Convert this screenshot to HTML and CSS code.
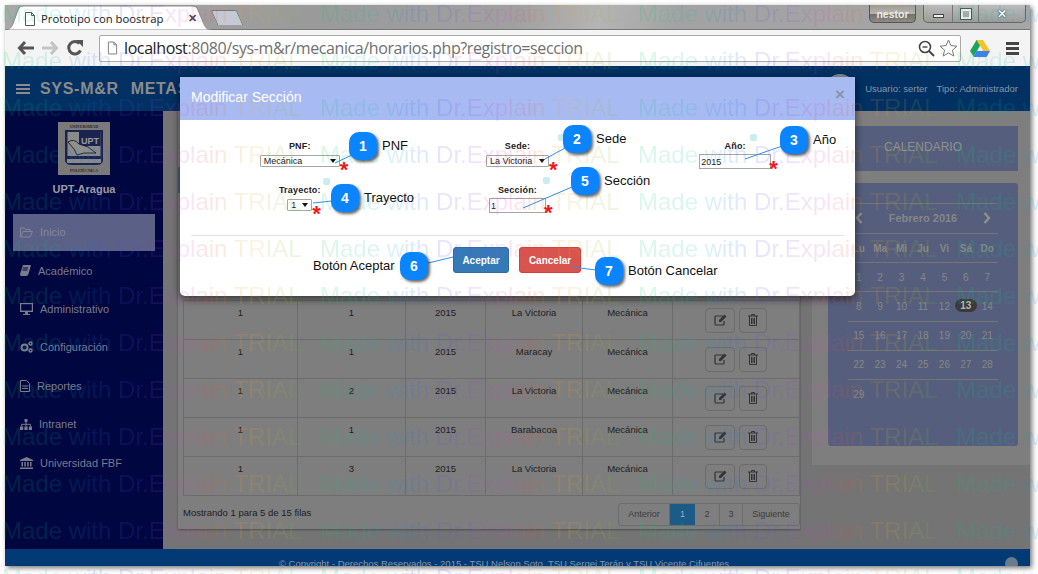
FILE: index.html
```html
<!DOCTYPE html>
<html lang="es">
<head>
  <meta charset="UTF-8">
  <meta name="viewport" content="width=device-width, initial-scale=1.0">
  <title>Prototipo con boostrap</title>
  <link rel="stylesheet" href="styles.css">
</head>
<body>
  <div class="window">
    <div class="titlebar">
      <div class="tab">
        <svg class="tab-shape" width="206" height="25" viewBox="0 0 206 25"><path d="M0 25 C5 25 7 22 9 16 L13 5 C14 2 16 1 19 1 L186 1 C190 1 192 2 193 5 L198 17 C200 22 202 25 206 25 Z" fill="#fff" stroke="#8a8a8a"/></svg>
        <svg class="tab-icon" width="12" height="14" viewBox="0 0 12 14"><path d="M1.5 .5 H7.5 L10.5 3.5 V13.5 H1.5 Z M7.5 .5 V3.5 H10.5" fill="#fff" stroke="#555"/></svg>
        <span class="tab-title">Prototipo con boostrap</span>
        <span class="tab-close">✕</span>
      </div>
      <div class="newtab"></div>
      <div class="user-badge">nestor</div>
      <div class="win-buttons">
        <span class="win-btn"><i class="min"></i></span>
        <span class="win-btn mid"><i class="max"></i></span>
        <span class="win-btn close">✕</span>
      </div>
    </div>

    <div class="toolbar">
      <svg class="tool" width="18" height="16" viewBox="0 0 18 16"><path d="M8 2 L2.5 8 L8 14 M3 8 H17" fill="none" stroke="#555" stroke-width="3"/></svg>
      <svg class="tool" width="18" height="16" viewBox="0 0 18 16"><path d="M10 2 L15.5 8 L10 14 M15 8 H1" fill="none" stroke="#c4c4c4" stroke-width="3"/></svg>
      <svg class="tool" width="18" height="18" viewBox="0 0 18 18"><path d="M14.5 11.5 A6.2 6.2 0 1 1 13.5 4.5" fill="none" stroke="#555" stroke-width="3"/><path d="M10 1 H17 V8 Z" fill="#555"/></svg>
      <div class="address">
        <svg width="11" height="14" viewBox="0 0 12 14"><path d="M1.5 .5 H7.5 L10.5 3.5 V13.5 H1.5 Z M7.5 .5 V3.5 H10.5" fill="#fff" stroke="#777"/></svg>
        <span class="url"><b>localhost</b>:8080/sys-m&amp;r/mecanica/horarios.php?registro=seccion</span>
        <svg class="zoom-icon" width="17" height="17" viewBox="0 0 17 17"><circle cx="7" cy="7" r="5.5" fill="none" stroke="#444" stroke-width="1.6"/><path d="M11 11 L16 16" stroke="#444" stroke-width="2"/><path d="M4.5 7 H9.5" stroke="#444" stroke-width="1.4"/></svg>
        <svg width="19" height="18" viewBox="0 0 19 18"><path d="M9.5 1 L12 6.6 L18 7.2 L13.4 11.2 L14.8 17 L9.5 14 L4.2 17 L5.6 11.2 L1 7.2 L7 6.6 Z" fill="#fff" stroke="#777"/></svg>
      </div>
      <svg class="drive" width="20" height="17" viewBox="0 0 20 17"><path d="M6.5 0 H13 L7 11 L3.6 16.5 L0 11 Z" fill="#1da261"/><path d="M6.5 0 H13 L20 11 H13.2 Z" fill="#f6c32c"/><path d="M6.6 11 H20 L16.5 17 H3.4 Z" fill="#4080ea"/></svg>
      <div class="menu-bars"><i></i><i></i><i></i></div>
    </div>

    <div class="page">
      <header class="appbar">
        <div class="burger"><i></i><i></i><i></i></div>
        <span class="brand">SYS-M&amp;R</span>
        <span class="brand brand-two">METAS</span>
        <div class="session">
          <span class="avatar"></span>
          <span>Usuario: serter</span>
          <span>Tipo: Administrador</span>
        </div>
      </header>

      <div class="layout">
        <aside class="sidebar">
          <svg class="logo" width="52" height="53" viewBox="0 0 52 53">
            <rect width="52" height="53" fill="#7a7a7a"/>
            <text x="26" y="6" class="logo-small">UNIVERSIDAD</text>
            <path d="M7 8 H45 V38 Q45 43 38 43 H14 Q7 43 7 38 Z" fill="#1b2450"/>
            <rect x="9.5" y="10" width="33" height="24" fill="#8a8a8a"/>
            <rect x="21" y="10" width="21.5" height="14" fill="#1b2450"/>
            <path d="M10 20 Q16 16 21 22 L30 25 L38 31 L26 31 L19 33 L16 27 Z" fill="#8f8f8f" stroke="#111" stroke-width=".8"/>
            <text x="32" y="22" class="logo-text">UPT</text>
            <rect x="9" y="37" width="34" height="4" fill="#8a8a8a"/>
            <text x="26" y="50" class="logo-small">POLITÉCNICA</text>
          </svg>
          <div class="campus">UPT-Aragua</div>
          <nav class="nav">
            <a class="nav-item active">
              <svg width="13" height="11" viewBox="0 0 13 11"><path d="M.5 10 V1 H4.5 L5.5 2.5 H10 V4.5 M.5 10 L3 4.5 H12.5 L10 10 Z" fill="none" stroke="#81849c"/></svg>
              <span>Inicio</span>
            </a>
            <a class="nav-item">
              <svg width="11" height="11" viewBox="0 0 11 11"><path d="M3 0 H11 L8.5 9 Q8 11 6 11 H1 Q0 11 0 9 Z" fill="#7b7b8c"/><path d="M3 3 H8 M2.5 5 H7.5" stroke="#000640"/></svg>
              <span>Académico</span>
            </a>
            <a class="nav-item">
              <svg width="13" height="12" viewBox="0 0 13 12"><path d="M0 0 H13 V9 H8 V11 H10 V12 H3 V11 H5 V9 H0 Z" fill="#7b7b8c"/><rect x="1.2" y="1.2" width="10.6" height="6.4" fill="#000640"/></svg>
              <span>Administrativo</span>
            </a>
            <a class="nav-item">
              <svg width="13" height="12" viewBox="0 0 13 12"><circle cx="4.5" cy="6.5" r="3" fill="none" stroke="#7b7b8c" stroke-width="2"/><circle cx="10.5" cy="2.5" r="1.5" fill="none" stroke="#7b7b8c" stroke-width="1.4"/><circle cx="10.5" cy="9.5" r="1.5" fill="none" stroke="#7b7b8c" stroke-width="1.4"/></svg>
              <span>Configuración</span>
            </a>
            <a class="nav-item">
              <svg width="10" height="12" viewBox="0 0 10 12"><path d="M.5 .5 H6.5 L9.5 3.5 V11.5 H.5 Z" fill="none" stroke="#7b7b8c"/><path d="M2 6 H8 M2 8.5 H8" stroke="#7b7b8c"/></svg>
              <span>Reportes</span>
            </a>
            <a class="nav-item">
              <svg width="12" height="11" viewBox="0 0 12 11"><path d="M4.5 0 H7.5 V3 H4.5 Z M0 7.5 H3.2 V11 H0 Z M4.4 7.5 H7.6 V11 H4.4 Z M8.8 7.5 H12 V11 H8.8 Z" fill="#7b7b8c"/><path d="M1.6 7.5 V5.3 H10.4 V7.5 M6 3 V7.5" fill="none" stroke="#7b7b8c"/></svg>
              <span>Intranet</span>
            </a>
            <a class="nav-item">
              <svg width="13" height="12" viewBox="0 0 13 12"><path d="M6.5 0 L13 3 V4 H0 V3 Z M0 10.5 H13 V12 H0 Z M1.5 5 H3 V9.5 H1.5 Z M4.3 5 H5.8 V9.5 H4.3 Z M7.2 5 H8.7 V9.5 H7.2 Z M10 5 H11.5 V9.5 H10 Z" fill="#7b7b8c"/></svg>
              <span>Universidad FBF</span>
            </a>
          </nav>
        </aside>

        <main class="content">
          <section class="table-panel">
            <div class="panel-head"></div>
            <table class="grid">
              <tbody>
                <tr>
                  <td>1</td><td>1</td><td>2015</td><td>La Victoria</td><td>Mecánica</td>
                  <td class="actions"><span class="icon-btn"><svg width="13" height="12" viewBox="0 0 13 12"><path d="M9 2 H2 Q1 2 1 3 V10 Q1 11 2 11 H9 Q10 11 10 10 V7" fill="none" stroke="#333" stroke-width="1.2"/><path d="M5 6 L10.5 .5 L12.5 2.5 L7 8 H5 Z" fill="#333"/></svg></span><span class="icon-btn trash"><svg width="10" height="12" viewBox="0 0 10 12"><path d="M0 2 H10 M3.5 2 V.5 H6.5 V2 M1.5 2 V11.5 H8.5 V2 M3.5 4 V10 M5 4 V10 M6.5 4 V10" fill="none" stroke="#333"/></svg></span></td>
                </tr>
                <tr>
                  <td>1</td><td>1</td><td>2015</td><td>Maracay</td><td>Mecánica</td>
                  <td class="actions"><span class="icon-btn"><svg width="13" height="12" viewBox="0 0 13 12"><path d="M9 2 H2 Q1 2 1 3 V10 Q1 11 2 11 H9 Q10 11 10 10 V7" fill="none" stroke="#333" stroke-width="1.2"/><path d="M5 6 L10.5 .5 L12.5 2.5 L7 8 H5 Z" fill="#333"/></svg></span><span class="icon-btn trash"><svg width="10" height="12" viewBox="0 0 10 12"><path d="M0 2 H10 M3.5 2 V.5 H6.5 V2 M1.5 2 V11.5 H8.5 V2 M3.5 4 V10 M5 4 V10 M6.5 4 V10" fill="none" stroke="#333"/></svg></span></td>
                </tr>
                <tr>
                  <td>1</td><td>2</td><td>2015</td><td>La Victoria</td><td>Mecánica</td>
                  <td class="actions"><span class="icon-btn"><svg width="13" height="12" viewBox="0 0 13 12"><path d="M9 2 H2 Q1 2 1 3 V10 Q1 11 2 11 H9 Q10 11 10 10 V7" fill="none" stroke="#333" stroke-width="1.2"/><path d="M5 6 L10.5 .5 L12.5 2.5 L7 8 H5 Z" fill="#333"/></svg></span><span class="icon-btn trash"><svg width="10" height="12" viewBox="0 0 10 12"><path d="M0 2 H10 M3.5 2 V.5 H6.5 V2 M1.5 2 V11.5 H8.5 V2 M3.5 4 V10 M5 4 V10 M6.5 4 V10" fill="none" stroke="#333"/></svg></span></td>
                </tr>
                <tr>
                  <td>1</td><td>1</td><td>2015</td><td>Barabacoa</td><td>Mecánica</td>
                  <td class="actions"><span class="icon-btn"><svg width="13" height="12" viewBox="0 0 13 12"><path d="M9 2 H2 Q1 2 1 3 V10 Q1 11 2 11 H9 Q10 11 10 10 V7" fill="none" stroke="#333" stroke-width="1.2"/><path d="M5 6 L10.5 .5 L12.5 2.5 L7 8 H5 Z" fill="#333"/></svg></span><span class="icon-btn trash"><svg width="10" height="12" viewBox="0 0 10 12"><path d="M0 2 H10 M3.5 2 V.5 H6.5 V2 M1.5 2 V11.5 H8.5 V2 M3.5 4 V10 M5 4 V10 M6.5 4 V10" fill="none" stroke="#333"/></svg></span></td>
                </tr>
                <tr>
                  <td>1</td><td>3</td><td>2015</td><td>La Victoria</td><td>Mecánica</td>
                  <td class="actions"><span class="icon-btn"><svg width="13" height="12" viewBox="0 0 13 12"><path d="M9 2 H2 Q1 2 1 3 V10 Q1 11 2 11 H9 Q10 11 10 10 V7" fill="none" stroke="#333" stroke-width="1.2"/><path d="M5 6 L10.5 .5 L12.5 2.5 L7 8 H5 Z" fill="#333"/></svg></span><span class="icon-btn trash"><svg width="10" height="12" viewBox="0 0 10 12"><path d="M0 2 H10 M3.5 2 V.5 H6.5 V2 M1.5 2 V11.5 H8.5 V2 M3.5 4 V10 M5 4 V10 M6.5 4 V10" fill="none" stroke="#333"/></svg></span></td>
                </tr>
              </tbody>
            </table>
            <div class="table-foot">
              <span>Mostrando 1 para 5 de 15 filas</span>
              <div class="pager">
                <span class="pg pg-prev">Anterior</span>
                <span class="pg pg-on">1</span>
                <span class="pg pg-two">2</span>
                <span class="pg pg-three">3</span>
                <span class="pg pg-next">Siguiente</span>
              </div>
            </div>
          </section>

          <section class="side-panel">
            <div class="cal-head">CALENDARIO</div>
            <div class="calendar">
              <div class="cal-month">
                <svg width="8" height="12" viewBox="0 0 8 12"><path d="M6.5 1 L2 6 L6.5 11" fill="none" stroke="#909090" stroke-width="2.4"/></svg>
                <span>Febrero 2016</span>
                <svg width="8" height="12" viewBox="0 0 8 12"><path d="M1.5 1 L6 6 L1.5 11" fill="none" stroke="#909090" stroke-width="2.4"/></svg>
              </div>
              <div class="cal-row cal-days"><span>Lu</span><span>Ma</span><span>Mi</span><span>Ju</span><span>Vi</span><span>Sá</span><span>Do</span></div>
              <div class="cal-row"><span>1</span><span>2</span><span>3</span><span>4</span><span>5</span><span>6</span><span>7</span></div>
              <div class="cal-row"><span>8</span><span>9</span><span>10</span><span>11</span><span>12</span><span class="today">13</span><span>14</span></div>
              <div class="cal-row"><span>15</span><span>16</span><span>17</span><span>18</span><span>19</span><span>20</span><span>21</span></div>
              <div class="cal-row"><span>22</span><span>23</span><span>24</span><span>25</span><span>26</span><span>27</span><span>28</span></div>
              <div class="cal-row"><span>29</span></div>
            </div>
          </section>
        </main>
      </div>

      <footer class="appfoot">
        <span>© Copyright - Derechos Reservados - 2015 - TSU Nelson Soto, TSU Sergei Terán y TSU Vicente Cifuentes</span>
        <i class="to-top"></i>
      </footer>
    </div>

    <div class="modal">
      <div class="modal-head">
        <span>Modificar Sección</span>
        <span class="modal-x">×</span>
      </div>
      <form class="modal-form">
        <div class="field">
          <label>PNF:</label>
          <span class="control"><span class="pick pick-pnf">Mecánica</span><em>*</em></span>
        </div>
        <div class="field">
          <label>Sede:</label>
          <span class="control"><span class="pick pick-sede">La Victoria</span><em>*</em></span>
        </div>
        <div class="field">
          <label>Año:</label>
          <span class="control"><input class="text-in in-year" type="text" value="2015"><em class="by-input">*</em></span>
        </div>
        <div class="field">
          <label>Trayecto:</label>
          <span class="control"><span class="pick pick-tray">1</span><em>*</em></span>
        </div>
        <div class="field">
          <label>Sección:</label>
          <span class="control"><input class="text-in in-sec" type="text" value="1"><em class="by-input">*</em></span>
        </div>
      </form>
      <div class="modal-foot">
        <button class="btn btn-ok" type="button">Aceptar</button>
        <button class="btn btn-no" type="button">Cancelar</button>
      </div>
    </div>
  </div>

  <div class="watermark" aria-hidden="true">
    <div><span>Made with Dr.Explain TRIAL</span><span>Made with Dr.Explain TRIAL</span><span>Made with Dr.Explain TRIAL</span><span>Made with Dr.Explain TRIAL</span></div>
    <div><span>Made with Dr.Explain TRIAL</span><span>Made with Dr.Explain TRIAL</span><span>Made with Dr.Explain TRIAL</span><span>Made with Dr.Explain TRIAL</span></div>
    <div><span>Made with Dr.Explain TRIAL</span><span>Made with Dr.Explain TRIAL</span><span>Made with Dr.Explain TRIAL</span><span>Made with Dr.Explain TRIAL</span></div>
    <div><span>Made with Dr.Explain TRIAL</span><span>Made with Dr.Explain TRIAL</span><span>Made with Dr.Explain TRIAL</span><span>Made with Dr.Explain TRIAL</span></div>
    <div><span>Made with Dr.Explain TRIAL</span><span>Made with Dr.Explain TRIAL</span><span>Made with Dr.Explain TRIAL</span><span>Made with Dr.Explain TRIAL</span></div>
    <div><span>Made with Dr.Explain TRIAL</span><span>Made with Dr.Explain TRIAL</span><span>Made with Dr.Explain TRIAL</span><span>Made with Dr.Explain TRIAL</span></div>
    <div><span>Made with Dr.Explain TRIAL</span><span>Made with Dr.Explain TRIAL</span><span>Made with Dr.Explain TRIAL</span><span>Made with Dr.Explain TRIAL</span></div>
    <div><span>Made with Dr.Explain TRIAL</span><span>Made with Dr.Explain TRIAL</span><span>Made with Dr.Explain TRIAL</span><span>Made with Dr.Explain TRIAL</span></div>
    <div><span>Made with Dr.Explain TRIAL</span><span>Made with Dr.Explain TRIAL</span><span>Made with Dr.Explain TRIAL</span><span>Made with Dr.Explain TRIAL</span></div>
    <div><span>Made with Dr.Explain TRIAL</span><span>Made with Dr.Explain TRIAL</span><span>Made with Dr.Explain TRIAL</span><span>Made with Dr.Explain TRIAL</span></div>
    <div><span>Made with Dr.Explain TRIAL</span><span>Made with Dr.Explain TRIAL</span><span>Made with Dr.Explain TRIAL</span><span>Made with Dr.Explain TRIAL</span></div>
    <div><span>Made with Dr.Explain TRIAL</span><span>Made with Dr.Explain TRIAL</span><span>Made with Dr.Explain TRIAL</span><span>Made with Dr.Explain TRIAL</span></div>
    <div><span>Made with Dr.Explain TRIAL</span><span>Made with Dr.Explain TRIAL</span><span>Made with Dr.Explain TRIAL</span><span>Made with Dr.Explain TRIAL</span></div>
  </div>

  <!-- callouts drawn on top of the screenshot -->
  <div class="notes">
    <svg class="leaders" width="1038" height="574" viewBox="0 0 1038 574">
      <path d="M335 163 L352 155 M545 159 L565 148 M745 159 L782 146 M313 203 L332 201 M523 208 L572 187 M428 263 L453 257 M572 267 L596 270" stroke="#2f8ff0" stroke-width="1" fill="none"/>
    </svg>
    <i class="dot d1"></i><i class="dot d2"></i><i class="dot d3"></i><i class="dot d4"></i>
    <span class="badge b1">1</span><span class="note t1">PNF</span>
    <span class="badge b2">2</span><span class="note t2">Sede</span>
    <span class="badge b3">3</span><span class="note t3">Año</span>
    <span class="badge b4">4</span><span class="note t4">Trayecto</span>
    <span class="badge b5">5</span><span class="note t5">Sección</span>
    <span class="badge b6">6</span><span class="note t6">Botón Aceptar</span>
    <span class="badge b7">7</span><span class="note t7">Botón Cancelar</span>
  </div>
</body>
</html>
```

FILE: styles.css
```css
* {
  margin: 0;
  padding: 0;
  box-sizing: border-box;
}

html, body {
  width: 1038px;
  height: 574px;
  overflow: hidden;
  background: #fff;
}

body {
  position: relative;
  font-family: "Liberation Sans", Arial, sans-serif;
}

.window {
  position: relative;
  width: 1025px;
  height: 561px;
  margin: 5px 0 0 5px;
  box-shadow: 2px 2px 5px rgba(0, 0, 0, .55);
  overflow: hidden;
}

/* browser chrome */
.titlebar {
  display: flex;
  align-items: flex-start;
  height: 25px;
  background: linear-gradient(100deg, #a9a9a9 0%, #9a9a9a 30%, #a0a0a0 50%, #b4b4b4 58%, #a2a2a2 66%, #a6a6a6 100%);
  border-bottom: 1px solid #777;
}

.tab {
  position: relative;
  display: flex;
  align-items: center;
  width: 206px;
  height: 25px;
  padding: 2px 0 0 19px;
}

.tab-shape {
  position: absolute;
  left: 0;
  top: 0;
}

.tab-icon, .tab-title, .tab-close {
  position: relative;
}

.tab-title {
  margin-left: 5px;
  width: 147px;
  font: 11.3px "Open Sans", sans-serif;
  color: #222;
  white-space: nowrap;
}

.tab-close {
  font-size: 11px;
  font-weight: bold;
  color: #444;
}

.newtab {
  width: 26px;
  height: 15px;
  margin: 5px 0 0 3px;
  background: #c3cad3;
  border: 1px solid #777;
  border-bottom: 0;
  border-radius: 2px 2px 0 0;
  transform: skewX(24deg);
}

.user-badge {
  width: 47px;
  height: 18px;
  margin: 0 0 0 auto;
  text-align: center;
  font: bold 10.5px/18px "Liberation Sans", sans-serif;
  color: #eee;
  background: linear-gradient(#999, #b5b5b5 50%, #6e6e6e 55%, #8a8a8a);
  border: 1px solid #555;
  border-top: 0;
  border-radius: 0 0 5px 5px;
}

.win-buttons {
  display: flex;
  height: 18px;
  margin: 0 4px 0 7px;
  border: 1px solid #666;
  border-top: 0;
  border-radius: 0 0 5px 5px;
  background: linear-gradient(#bbb, #9c9c9c);
}

.win-btn {
  display: flex;
  align-items: center;
  justify-content: center;
  width: 29px;
  border-right: 1px solid #777;
  color: #fff;
  font-size: 12px;
  font-weight: bold;
}

.win-btn.mid {
  width: 26px;
}

.win-btn.close {
  width: 46px;
  border: 0;
  text-shadow: 0 0 1px #222, 0 0 1px #222;
}

.win-btn .min {
  width: 11px;
  height: 4px;
  margin-top: 4px;
  background: #eee;
  border: 1px solid #444;
}

.win-btn .max {
  width: 10px;
  height: 10px;
  border: 2px solid #eee;
  outline: 1px solid #555;
}

.toolbar {
  display: flex;
  align-items: center;
  height: 36px;
  padding: 0 10px 0 12px;
  background: #f4f4f4;
}

.tool {
  margin-right: 6px;
}

.tool:nth-child(3) {
  margin: 0 10px 0 1px;
}

.address {
  display: flex;
  align-items: center;
  width: 862px;
  height: 27px;
  padding: 0 2px 0 7px;
  margin-left: 5px;
  background: #fff;
  border: 1px solid #aaa;
  border-radius: 2px;
}

.url {
  margin-left: 6px;
  font: 16px "Open Sans", sans-serif;
  letter-spacing: -.4px;
  color: #6f6f6f;
  white-space: nowrap;
}

.url b {
  font-weight: normal;
  color: #222;
}

.zoom-icon {
  margin: 0 4px 0 auto;
}

.drive {
  margin-left: 9px;
}

.menu-bars {
  margin-left: 16px;
}

.menu-bars i {
  display: block;
  width: 13px;
  height: 3px;
  margin: 2px 0;
  background: #444;
}

/* dimmed application behind the modal */
.page {
  display: flex;
  flex-direction: column;
  height: 500px;
}

.appbar {
  display: flex;
  align-items: center;
  height: 45px;
  flex: none;
  padding-left: 11px;
  background: #013063;
  color: #8b8b8b;
}

.burger {
  margin-right: 10px;
}

.burger i {
  display: block;
  width: 14px;
  height: 2px;
  margin: 2px 0;
  background: #8b8b8b;
}

.brand {
  font-size: 16px;
  font-weight: bold;
  letter-spacing: .7px;
  white-space: nowrap;
}

.brand-two {
  margin-left: 12px;
}

.session {
  display: flex;
  align-items: center;
  margin-left: auto;
  gap: 9px;
  padding-right: 12px;
  font-size: 9.5px;
  color: #8797a8;
}

.avatar {
  width: 28px;
  height: 28px;
  margin: -1px 2px 0 0;
  border-radius: 50%;
  background: #8a8a8a;
}

.layout {
  display: flex;
  flex: 1;
  min-height: 0;
}

.sidebar {
  flex: none;
  width: 158px;
  background: #000640;
}

.logo {
  display: block;
  margin: 11px auto 0;
}

.logo-text {
  font: bold 9px "Liberation Sans", sans-serif;
  fill: #9a9a9a;
  text-anchor: middle;
}

.logo-small {
  font: bold 4px "Liberation Serif", serif;
  fill: #222;
  text-anchor: middle;
}

.campus {
  margin-top: 8px;
  text-align: center;
  font-size: 11px;
  font-weight: bold;
  color: #9a9aa6;
}

.nav {
  margin: 19px 8px 0;
}

.nav-item {
  display: flex;
  align-items: center;
  height: 38.4px;
  padding-left: 7px;
  gap: 7px;
  font-size: 11px;
  color: #7a7a8c;
  white-space: nowrap;
}

.nav-item.active {
  height: 36.5px;
  margin-bottom: 1px;
  background: #5a6086;
  color: #84879c;
}

.content {
  display: flex;
  flex: 1;
  min-width: 0;
  background: #747474;
}

.table-panel {
  width: 622px;
  height: 418px;
  margin: 0 12px 0 15px;
  padding: 56px 0 0 5px;
  background: #7e7e7e;
  box-shadow: 0 1px 2px rgba(0, 0, 0, .35);
}

.panel-head {
  height: 26px;
  margin: 0 0 107px -5px;
  background: #555f7d;
}

.grid {
  width: 617px;
  border-collapse: collapse;
  table-layout: fixed;
  font-size: 9.5px;
  color: #1d1d1d;
}

.grid td {
  height: 39px;
  padding-top: 6px;
  text-align: center;
  vertical-align: top;
  border: 1px solid #6c6c6c;
}

.grid td:nth-child(1) { width: 114px; }
.grid td:nth-child(2) { width: 108px; }
.grid td:nth-child(3) { width: 80px; }
.grid td:nth-child(4) { width: 97px; }
.grid td:nth-child(5) { width: 90px; }

.grid td.actions {
  padding: 7px 0 0 32px;
  text-align: left;
  white-space: nowrap;
}

.icon-btn {
  display: inline-flex;
  align-items: center;
  justify-content: center;
  width: 30px;
  height: 25px;
  padding-bottom: 2px;
  border: 1px solid #6c6c6c;
  border-radius: 4px;
  vertical-align: top;
}

.icon-btn.trash {
  width: 28px;
  margin-left: 4px;
}

.table-foot {
  display: flex;
  justify-content: space-between;
  align-items: flex-start;
  padding-top: 7px;
  font-size: 9.5px;
  color: #1d1d1d;
}

.table-foot > span {
  padding-top: 4px;
}

.pager {
  display: flex;
  height: 23px;
  line-height: 21px;
  text-align: center;
  color: #3c3c3c;
  font-size: 9px;
  border: 1px solid #6c6c6c;
  border-radius: 3px;
}

.pg {
  border-right: 1px solid #6c6c6c;
}

.pg-prev { width: 51px; }
.pg-on { width: 25px; background: #1c5a88; color: #9fb0bf; border: 0; }
.pg-two { width: 25px; }
.pg-three { width: 23px; }
.pg-next { width: 56px; border: 0; }

.side-panel {
  width: 218px;
  height: 354px;
  padding: 15px 12px 0 16px;
  background: #7e7e7e;
}

.cal-head {
  height: 45px;
  text-align: center;
  font-size: 12px;
  line-height: 42px;
  color: #8f8f8f;
  background: #555f7d;
}

.calendar {
  height: 263px;
  margin-top: 12px;
  padding: 20px 20px 0;
  background: #555f7d;
  border-radius: 3px;
  color: #868686;
  font-size: 10px;
}

.cal-month {
  display: flex;
  align-items: center;
  justify-content: space-between;
  height: 30px;
  padding: 0 7px 2px;
  border-top: 1px solid #747474;
  font-size: 11px;
  font-weight: bold;
}

.cal-row {
  display: grid;
  grid-template-columns: repeat(7, 1fr);
  align-items: center;
  height: 29.2px;
  text-align: center;
  border-top: 1px solid #747474;
}

.cal-days {
  font-weight: bold;
}

.today {
  height: 13px;
  line-height: 13px;
  margin-top: -1px;
  border-radius: 7px;
  background: #3a3a3a;
  color: #b5b5b5;
  font-weight: bold;
}

.appfoot {
  position: relative;
  flex: none;
  height: 17px;
  overflow: hidden;
  padding: 9px 27px 0 0;
  text-align: center;
  font-size: 9.5px;
  line-height: 12px;
  color: #8797a8;
  background: #013a74;
}

.to-top {
  position: absolute;
  right: 12px;
  top: 8px;
  width: 13px;
  height: 13px;
  border-radius: 50%;
  background: #6b7a8c;
}

/* modal */
.modal {
  position: absolute;
  left: 175px;
  top: 72px;
  width: 675px;
  height: 219px;
  background: #fff;
  border-radius: 0 0 5px 5px;
  box-shadow: 0 3px 9px rgba(0, 0, 0, .6);
}

.modal-head {
  display: flex;
  justify-content: space-between;
  align-items: center;
  height: 43px;
  padding: 0 10px 3px 11px;
  font-size: 14px;
  color: #fff;
  background: #a8baf2;
}

.modal-x {
  margin-top: -5px;
  font-size: 17px;
  font-weight: bold;
  color: #8b92ab;
}

.modal-form {
  display: grid;
  grid-template-columns: repeat(3, 1fr);
  align-content: start;
  row-gap: 17px;
  height: 116px;
  margin: 0 11px;
  padding-top: 20px;
  border-bottom: 1px solid #e3e3e3;
}

.field {
  display: flex;
  flex-direction: column;
  align-items: center;
  height: 27px;
}

.field label {
  font-size: 9px;
  font-weight: bold;
  letter-spacing: .2px;
  line-height: 12px;
  color: #222;
}

.control {
  position: relative;
  display: block;
  margin-top: 3px;
}

.control em {
  position: absolute;
  left: 100%;
  bottom: -14px;
  font-family: "Liberation Sans", sans-serif;
  font-size: 22px;
  font-style: normal;
  font-weight: bold;
  line-height: 22px;
  color: #f01818;
}

.control em.by-input {
  bottom: -11px;
  margin-left: -2px;
}

.pick {
  position: relative;
  display: block;
  height: 12px;
  padding-left: 3px;
  font-size: 9px;
  line-height: 10px;
  color: #222;
  background: #fff;
  border: 1px solid #a6a6a6;
  border-radius: 1px;
  white-space: nowrap;
}

.pick::after {
  content: "";
  position: absolute;
  right: 3px;
  top: 3px;
  border: 3px solid transparent;
  border-top: 4px solid #111;
  border-bottom: 0;
}

.pick-pnf { width: 80px; }
.pick-sede { width: 63px; }
.pick-tray { width: 25px; }

.text-in {
  display: block;
  height: 15px;
  padding-left: 1px;
  font: 9px "Liberation Sans", sans-serif;
  color: #222;
  background: #fff;
  border: 1px solid #a6a6a6;
  outline: 0;
}

.in-year { width: 72px; margin-top: -1px; }
.in-sec { width: 57px; margin-top: -1px; }

.modal-foot {
  display: flex;
  justify-content: center;
  gap: 10px;
  margin-top: 11px;
  padding-right: 1px;
}

.btn {
  height: 26px;
  border: 1px solid transparent;
  border-radius: 3px;
  font: bold 10px "Liberation Sans", sans-serif;
  color: #fff;
}

.btn-ok { width: 56px; background: #337ab7; border-color: #2e6da4; }
.btn-no { width: 62px; background: #d9534f; border-color: #d43f3a; }

/* watermark stays on top of the page */
.watermark {
  position: absolute;
  left: 0;
  top: 0;
  width: 1038px;
  height: 574px;
  overflow: hidden;
  padding-left: 2px;
  pointer-events: none;
  opacity: .14;
}

.watermark div {
  display: flex;
  height: 47px;
  font-size: 24px;
  line-height: 47px;
  white-space: nowrap;
}

.watermark div:first-child {
  margin-top: -10px;
}

.watermark span {
  flex: none;
  width: 301px;
  margin-right: 17px;
  background: linear-gradient(90deg, #00d060 0%, #00c0b0 18%, #1a78f0 30%, #7040f0 45%, #e040c0 62%, #f05030 70%, #f0b020 82%, #60c030 100%);
  -webkit-background-clip: text;
  background-clip: text;
  color: transparent;
}

/* callouts */
.notes {
  position: absolute;
  left: 0;
  top: 0;
  width: 1038px;
  height: 574px;
}

.leaders {
  position: absolute;
  left: 0;
  top: 0;
}

.dot {
  position: absolute;
  width: 7px;
  height: 7px;
  border-radius: 2px;
  background: #c9eef2;
}

.d1 { left: 323px; top: 178px; }
.d2 { left: 558px; top: 134px; }
.d3 { left: 750px; top: 134px; }
.d4 { left: 543px; top: 177px; }

.badge {
  position: absolute;
  width: 28px;
  height: 28px;
  border-radius: 10px;
  text-align: center;
  font-size: 14px;
  font-weight: bold;
  line-height: 28px;
  color: #fff;
  background: #0a84ff;
  box-shadow: 2px 2px 3px rgba(0, 0, 0, .6);
}

.note {
  position: absolute;
  font-size: 13px;
  line-height: 16px;
  color: #111;
  white-space: nowrap;
}

.b1 { left: 349px; top: 132px; }
.b2 { left: 563px; top: 125px; }
.b3 { left: 780px; top: 126px; }
.b4 { left: 331px; top: 184px; }
.b5 { left: 571px; top: 167px; }
.b6 { left: 400px; top: 252px; }
.b7 { left: 595px; top: 257px; }

.t1 { left: 382px; top: 138px; }
.t2 { left: 596px; top: 131px; }
.t3 { left: 813px; top: 132px; }
.t4 { left: 364px; top: 190px; }
.t5 { left: 604px; top: 173px; }
.t6 { left: 313px; top: 258px; }
.t7 { left: 628px; top: 263px; }
```
